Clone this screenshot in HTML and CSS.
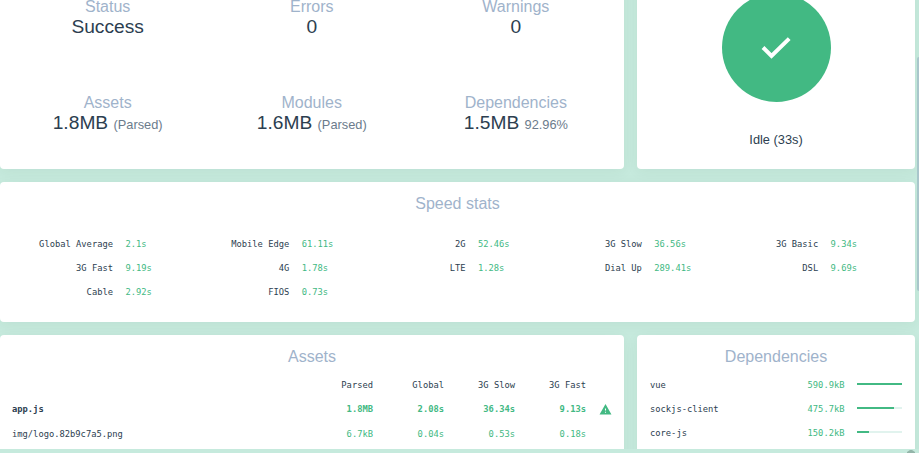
FILE: index.html
```html
<!DOCTYPE html>
<html lang="en">
<head>
<meta charset="utf-8">
<title>Dashboard</title>
<link rel="stylesheet" href="styles.css">
</head>
<body>
<main class="dashboard">
  <section class="card summary">
    <div class="stat"><h2>Status</h2><p>Success</p></div>
    <div class="stat"><h2>Errors</h2><p>0</p></div>
    <div class="stat"><h2>Warnings</h2><p>0</p></div>
    <div class="stat"><h2>Assets</h2><p>1.8MB <small>(Parsed)</small></p></div>
    <div class="stat"><h2>Modules</h2><p>1.6MB <small>(Parsed)</small></p></div>
    <div class="stat"><h2>Dependencies</h2><p>1.5MB <small>92.96%</small></p></div>
  </section>
  <section class="card progress">
    <div class="circle">
      <svg width="30" height="24" viewBox="0 0 30 24"><path fill="none" stroke="#fff" stroke-width="4" d="M2 11.5l8.5 8.5L28.2 2.6"/></svg>
    </div>
    <p>Idle (33s)</p>
  </section>
  <section class="card speed">
    <h2>Speed stats</h2>
    <div class="speeds">
      <div class="pair"><span>Global Average</span><b>2.1s</b></div>
      <div class="pair"><span>Mobile Edge</span><b>61.11s</b></div>
      <div class="pair"><span>2G</span><b>52.46s</b></div>
      <div class="pair"><span>3G Slow</span><b>36.56s</b></div>
      <div class="pair"><span>3G Basic</span><b>9.34s</b></div>
      <div class="pair"><span>3G Fast</span><b>9.19s</b></div>
      <div class="pair"><span>4G</span><b>1.78s</b></div>
      <div class="pair"><span>LTE</span><b>1.28s</b></div>
      <div class="pair"><span>Dial Up</span><b>289.41s</b></div>
      <div class="pair"><span>DSL</span><b>9.69s</b></div>
      <div class="pair"><span>Cable</span><b>2.92s</b></div>
      <div class="pair"><span>FIOS</span><b>0.73s</b></div>
    </div>
  </section>
  <section class="card list">
    <h2>Assets</h2>
    <div class="asset head"><span></span><span>Parsed</span><span>Global</span><span>3G Slow</span><span>3G Fast</span></div>
    <div class="asset big"><span>app.js</span><span>1.8MB</span><span>2.08s</span><span>36.34s</span><span>9.13s</span>
      <svg class="warn" width="13" height="13" viewBox="0 0 24 24"><path fill="#42b983" d="M1 21h22L12 2 1 21zm12-3h-2v-2h2v2zm0-4h-2v-4h2v4z"/></svg>
    </div>
    <div class="asset"><span>img/logo.82b9c7a5.png</span><span>6.7kB</span><span>0.04s</span><span>0.53s</span><span>0.18s</span></div>
  </section>
  <section class="card list deps">
    <h2>Dependencies</h2>
    <div class="dep"><span>vue</span><b>590.9kB</b><i class="bar"><i style="width:100%"></i></i></div>
    <div class="dep"><span>sockjs-client</span><b>475.7kB</b><i class="bar"><i style="width:82%"></i></i></div>
    <div class="dep"><span>core-js</span><b>150.2kB</b><i class="bar"><i style="width:26%"></i></i></div>
  </section>
</main>
<div class="scrollbar"></div>
<svg class="corner" width="8" height="4" viewBox="0 0 8 4"><path fill="#93b5a9" d="M0 4V3L3 1h2l3 2v1z"/></svg>
</body>
</html>
```
FILE: styles.css
```css
* { box-sizing: border-box; }
body {
  margin: 0;
  height: 453px;
  overflow: hidden;
  position: relative;
  background: #c6eadd;
  color: #2c3e50;
  font-family: "Liberation Sans", Arial, sans-serif;
}
h2, p { margin: 0; font-weight: normal; }
h2 {
  font-size: 16px;
  line-height: 20px;
  color: #9fb3cb;
  text-align: center;
}
.dashboard {
  width: 919px;
  height: 449px;
  overflow: hidden;
  display: grid;
  grid-template-columns: 624px 278px;
  grid-template-rows: 169px 140px 114px;
  gap: 13px;
}
.card {
  background: #fff;
  border-radius: 4px;
  box-shadow: 0 3px 14px rgba(0, 60, 40, .05);
}
.summary {
  border-top-left-radius: 0;
  border-top-right-radius: 0;
  margin-top: -20px;
  padding: 17px 6px 0 5.6px;
  display: grid;
  grid-template-columns: repeat(3, 204.1px);
  grid-auto-rows: 96px;
  align-content: start;
}
.stat { text-align: center; }
.stat p { font-size: 19.2px; line-height: 20px; }
.stat small { font-size: 12.8px; color: #6b7b8c; }
.progress {
  margin-top: -20px;
  padding-top: 13px;
  display: flex;
  flex-direction: column;
  align-items: center;
}
.circle {
  width: 109px;
  height: 109px;
  border-radius: 50%;
  background: #42b983;
  display: flex;
  align-items: center;
  justify-content: center;
}
.circle svg { display: block; }
.progress p { margin-top: 29px; font-size: 12.8px; line-height: 18px; }
.speed { grid-column: 1 / 3; padding-top: 12px; }
.speeds {
  margin: 18px 0 0 12px;
  display: grid;
  grid-template-columns: repeat(5, 176.3px);
  grid-auto-rows: 24px;
}
.pair, .asset, .dep {
  font: 8.77px/24px "DejaVu Sans Mono", monospace;
  white-space: pre;
}
.pair { display: grid; grid-template-columns: 101px 63px; gap: 12.4px; }
.pair span { text-align: right; }
.pair b, .dep b { font-weight: normal; color: #42b983; }
.list { height: 134px; padding: 12px 12px 0; }
.list h2 { margin-bottom: 6px; }
.asset {
  display: grid;
  grid-template-columns: 1fr repeat(4, 71px) 26px;
  align-items: center;
}
.asset span + span { text-align: right; color: #42b983; }
.asset.head span { color: #2c3e50; }
.asset.big { font-weight: bold; padding-bottom: 1px; }
.warn { justify-self: end; display: block; }
.deps { padding-left: 13px; padding-right: 13px; }
.dep {
  display: grid;
  grid-template-columns: 1fr auto 45px;
  column-gap: 12.5px;
  align-items: center;
  height: 24px;
}
.bar { display: block; height: 2px; margin-top: -2px; background: #e1f3ee; }
.bar i { display: block; height: 2px; background: #42b983; }
.scrollbar {
  position: absolute;
  right: 0;
  top: 57px;
  width: 2px;
  height: 234px;
  background: #a9c6cb;
  border-radius: 2px 0 0 2px;
}
.corner { position: absolute; left: 907px; bottom: 0; }
```
